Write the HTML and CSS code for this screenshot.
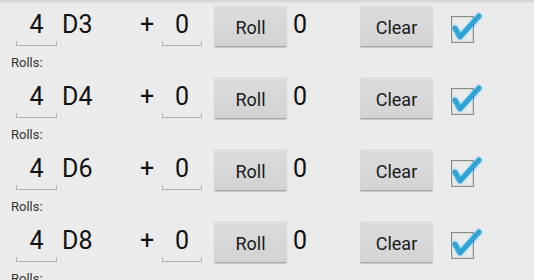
FILE: index.html
```html
<!DOCTYPE html>
<html lang="en">
<head>
    <meta charset="UTF-8">
    <meta name="viewport" content="width=device-width, initial-scale=1.0">
    <title>Dice Roller</title>
    <link rel="stylesheet" href="styles.css">
</head>
<body>
    <div class="list">
        <div class="die">
            <div class="controls">
                <span class="field count">4</span>
                <span class="name">D3</span>
                <span class="plus">+</span>
                <span class="field bias">0</span>
                <button class="btn roll">Roll</button>
                <span class="result">0</span>
                <button class="btn clear">Clear</button>
                <span class="check"><svg width="34" height="34" viewBox="0 0 34 34"><path d="M4 20 L9 29 L28 8" /></svg></span>
            </div>
            <div class="rolls">Rolls:</div>
        </div>
        <div class="die">
            <div class="controls">
                <span class="field count">4</span>
                <span class="name">D4</span>
                <span class="plus">+</span>
                <span class="field bias">0</span>
                <button class="btn roll">Roll</button>
                <span class="result">0</span>
                <button class="btn clear">Clear</button>
                <span class="check"><svg width="34" height="34" viewBox="0 0 34 34"><path d="M4 20 L9 29 L28 8" /></svg></span>
            </div>
            <div class="rolls">Rolls:</div>
        </div>
        <div class="die">
            <div class="controls">
                <span class="field count">4</span>
                <span class="name">D6</span>
                <span class="plus">+</span>
                <span class="field bias">0</span>
                <button class="btn roll">Roll</button>
                <span class="result">0</span>
                <button class="btn clear">Clear</button>
                <span class="check"><svg width="34" height="34" viewBox="0 0 34 34"><path d="M4 20 L9 29 L28 8" /></svg></span>
            </div>
            <div class="rolls">Rolls:</div>
        </div>
        <div class="die">
            <div class="controls">
                <span class="field count">4</span>
                <span class="name">D8</span>
                <span class="plus">+</span>
                <span class="field bias">0</span>
                <button class="btn roll">Roll</button>
                <span class="result">0</span>
                <button class="btn clear">Clear</button>
                <span class="check"><svg width="34" height="34" viewBox="0 0 34 34"><path d="M4 20 L9 29 L28 8" /></svg></span>
            </div>
            <div class="rolls">Rolls:</div>
        </div>
    </div>
</body>
</html>
```

FILE: styles.css
```css
body {
    margin: 0;
    background: #ebebeb;
    font-family: Roboto, "Liberation Sans", sans-serif;
    color: #111;
    overflow: hidden;
    height: 280px;
}
.list {
    position: relative;
}
.list::before {
    content: "";
    position: absolute;
    left: 0;
    right: 0;
    top: 0;
    height: 4px;
    background: linear-gradient(#cfcfcf, rgba(235,235,235,0));
}
.die {
    height: 72px;
}
.controls {
    display: flex;
    align-items: flex-start;
    height: 52px;
}
.field,
.name,
.plus,
.result {
    font-size: 25px;
    line-height: 30px;
    margin-top: 10px;
}
.field {
    position: relative;
    text-align: center;
    height: 30px;
}
.field::after {
    content: "";
    position: absolute;
    left: 0;
    right: 0;
    top: 31px;
    height: 4px;
    border: 1px solid #b4b4b4;
    border-top: none;
}
.count {
    width: 41px;
    margin-left: 16px;
}
.name {
    width: 60px;
    margin-left: 5px;
}
.plus {
    width: 16px;
    margin-left: 18px;
}
.bias {
    width: 40px;
    margin-left: 6px;
}
.btn {
    margin-top: 5px;
    width: 73px;
    height: 41px;
    padding: 3px 0 0;
    border: none;
    border-radius: 2px;
    background: linear-gradient(#dcdcdc, #d3d3d3);
    box-shadow: inset 0 1px 0 #e4e4e4, 0 1px 0 #a9a9a9, 0 2px 1px #c4c4c4;
    font-family: Roboto, "Liberation Sans", sans-serif;
    font-size: 18px;
    color: #1a1a1a;
}
.roll {
    margin-left: 12px;
}
.result {
    width: 48px;
    margin-left: 6px;
}
.clear {
    margin-left: 19px;
}
.check {
    position: relative;
    margin-left: 18px;
    margin-top: 16px;
    width: 21px;
    height: 25px;
    border: 1px solid #8c8c8c;
    box-shadow: inset 0 0 0 1px #d8d8d8;
}
.check svg {
    position: absolute;
    left: -1px;
    top: -9px;
}
.check path {
    fill: none;
    stroke: #2ea3d6;
    stroke-width: 5;
    stroke-linecap: round;
    stroke-linejoin: round;
    filter: drop-shadow(0 0 1.5px rgba(51,181,229,0.6));
}
.rolls {
    font-size: 13px;
    line-height: 16px;
    color: #333;
    margin-left: 11px;
    margin-top: 3px;
}
```
